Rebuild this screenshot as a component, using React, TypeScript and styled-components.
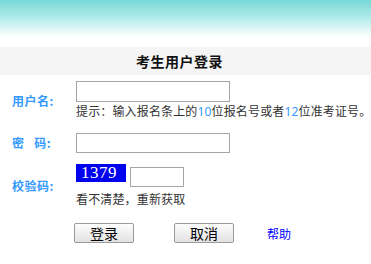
import React from "react";
import styled, { createGlobalStyle } from "styled-components";

const Global = createGlobalStyle`
  html, body { margin: 0; padding: 0; background: #fff; }
  body { font-family: "Noto Sans CJK SC", "Liberation Sans", sans-serif; font-size: 12px; color: #333; }
  * { box-sizing: border-box; }
`;

const Banner = styled.div`
  height: 37px;
  background: linear-gradient(to bottom, #78d8d8 0%, #b4ecec 50%, #ffffff 100%);
`;

const Spacer = styled.div`
  height: 10px;
`;

const TitleBar = styled.div`
  height: 28px;
  background: #f5f5f5;
  display: flex;
  justify-content: center;
  align-items: center;
  padding-right: 12px;
`;

const Title = styled.h1`
  margin: 0;
  font-size: 14px;
  font-weight: bold;
  color: #111;
  line-height: 28px;
  letter-spacing: 0.5px;
`;

const Form = styled.div`
  padding-top: 6px;
  display: flex;
  flex-direction: column;
`;

const Row = styled.div<{ $mt?: number }>`
  display: grid;
  grid-template-columns: 76px auto;
  align-items: center;
  margin-top: ${(p) => p.$mt ?? 0}px;
`;

const Label = styled.label`
  padding-left: 12px;
  color: #3399ff;
  font-weight: bold;
  font-size: 12px;
  white-space: pre;
  line-height: 14px;
  letter-spacing: 0.5px;
`;

const Field = styled.div`
  display: flex;
  flex-direction: column;
  align-items: flex-start;
  min-width: 0;
`;

const TextInput = styled.input<{ $w: number; $h: number }>`
  width: ${(p) => p.$w}px;
  height: ${(p) => p.$h}px;
  border: 1px solid #a5a5a5;
  background: #fff;
  margin: 0;
  padding: 0 2px;
  outline: none;
`;

const Hint = styled.div<{ $mt?: number }>`
  line-height: 16px;
  font-size: 12px;
  color: #333;
  margin-top: ${(p) => p.$mt ?? 0}px;
  white-space: nowrap;
  letter-spacing: 0.15px;
`;

const Num = styled.span`
  color: #3399ff;
  font-family: "Noto Sans", "Liberation Sans", sans-serif;
`;

const CaptchaLine = styled.div`
  display: flex;
  align-items: flex-start;
  gap: 4px;
`;

const Captcha = styled.div`
  width: 50px;
  height: 18px;
  background: #0000f0;
  color: #fff;
  font-family: "Liberation Serif", serif;
  font-size: 17px;
  line-height: 18px;
  padding-left: 5px;
  letter-spacing: 0.5px;
`;

const CaptchaInput = styled(TextInput)`
  margin-top: 3px;
`;

const Buttons = styled.div`
  display: flex;
  align-items: center;
  padding-left: 74px;
  margin-top: 16px;
`;

const Button = styled.button<{ $ml?: number }>`
  width: 60px;
  height: 20px;
  margin: 0 0 0 ${(p) => p.$ml ?? 0}px;
  padding: 0;
  border: 1px solid #9a9a9a;
  border-radius: 2px;
  background: linear-gradient(to bottom, #fdfdfd, #e2e2e2);
  font-family: "Noto Sans CJK SC", sans-serif;
  font-size: 14px;
  line-height: 18px;
  color: #000;
`;

const HelpLink = styled.a`
  margin-left: 33px;
  color: #0000ff;
  font-size: 12px;
  text-decoration: none;
`;

export default function App() {
  return (
    <>
      <Global />
      <Banner />
      <Spacer />
      <TitleBar>
        <Title>考生用户登录</Title>
      </TitleBar>
      <Form>
        <Row>
          <Label>用户名:</Label>
          <Field>
            <TextInput $w={154} $h={21} />
            <Hint $mt={1}>
              提示：输入报名条上的<Num>10</Num>位报名号或者<Num>12</Num>位准考证号。
            </Hint>
          </Field>
        </Row>
        <Row $mt={13}>
          <Label>{"密   码:"}</Label>
          <Field>
            <TextInput type="password" $w={154} $h={20} />
          </Field>
        </Row>
        <Row $mt={11}>
          <Label>校验码:</Label>
          <Field>
            <CaptchaLine>
              <Captcha>1379</Captcha>
              <CaptchaInput $w={54} $h={20} />
            </CaptchaLine>
            <Hint $mt={4}>看不清楚，重新获取</Hint>
          </Field>
        </Row>
        <Buttons>
          <Button>登录</Button>
          <Button $ml={40}>取消</Button>
          <HelpLink href="#">帮助</HelpLink>
        </Buttons>
      </Form>
    </>
  );
}
